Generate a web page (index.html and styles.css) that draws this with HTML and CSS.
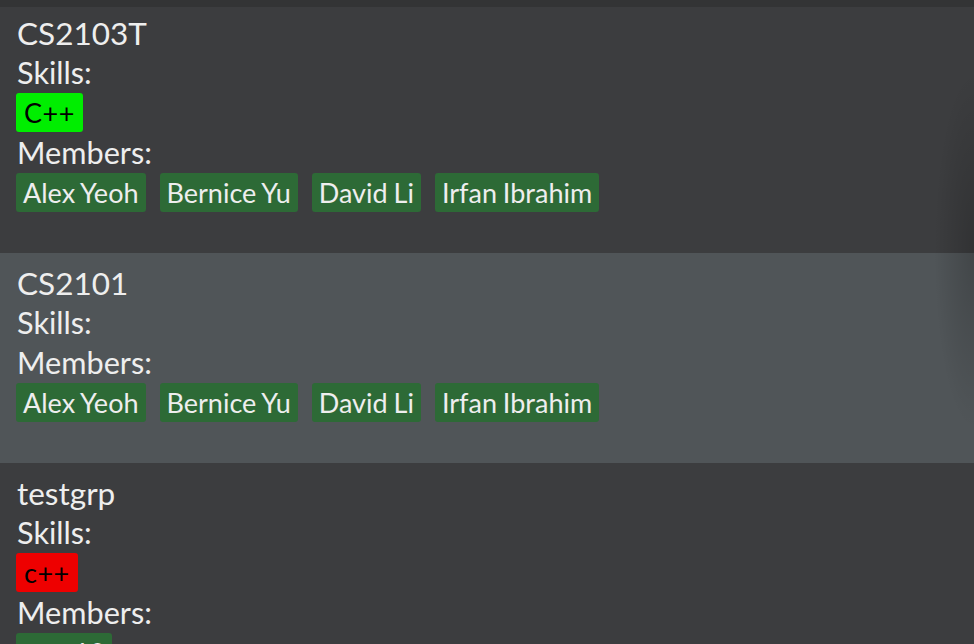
FILE: index.html
```html
<!DOCTYPE html>
<html lang="en">
<head>
<meta charset="utf-8">
<title>Groups</title>
<link rel="stylesheet" href="styles.css">
</head>
<body>
<div class="list">
  <div class="card card-first">
    <div class="title">CS2103T</div>
    <div class="label">Skills:</div>
    <div class="tags">
      <span class="tag tag-skill-ok">C++</span>
    </div>
    <div class="label">Members:</div>
    <div class="tags">
      <span class="tag">Alex Yeoh</span>
      <span class="tag">Bernice Yu</span>
      <span class="tag">David Li</span>
      <span class="tag">Irfan Ibrahim</span>
    </div>
  </div>
  <div class="card card-selected">
    <div class="title">CS2101</div>
    <div class="label">Skills:</div>
    <div class="label">Members:</div>
    <div class="tags">
      <span class="tag">Alex Yeoh</span>
      <span class="tag">Bernice Yu</span>
      <span class="tag">David Li</span>
      <span class="tag">Irfan Ibrahim</span>
    </div>
  </div>
  <div class="card">
    <div class="title">testgrp</div>
    <div class="label">Skills:</div>
    <div class="tags">
      <span class="tag tag-skill-bad">c++</span>
    </div>
    <div class="label">Members:</div>
    <div class="tags">
      <span class="tag">user12</span>
    </div>
  </div>
  <div class="edge-shadow"></div>
</div>
</body>
</html>
```
FILE: styles.css
```css
html, body {
  margin: 0;
  padding: 0;
  height: 100%;
  overflow: hidden;
  background: #3c3d3f;
}

.list {
  position: relative;
  display: flex;
  flex-direction: column;
  padding-top: 7px;
  background: #333435;
  min-height: 100%;
  box-sizing: border-box;
  font-family: "Lato", "Liberation Sans", sans-serif;
  color: #eeeeee;
}

.card {
  background: #3c3d3f;
  padding: 10px 0 40px 17px;
}

.card-first {
  padding-top: 6px;
}

.card-selected {
  background: #505558;
}

.title {
  font-size: 31.5px;
  line-height: 40px;
  height: 40px;
  white-space: nowrap;
}

.label {
  font-size: 30.7px;
  line-height: 40px;
  height: 40px;
  white-space: nowrap;
}

.tags {
  display: flex;
  gap: 14px;
  height: 40px;
  margin-left: -1px;
  align-items: flex-start;
}

.tag {
  display: block;
  height: 39px;
  box-sizing: border-box;
  padding: 3px 7px;
  font-size: 27px;
  line-height: 33px;
  border-radius: 3px;
  background: #2d6a36;
  color: #eeeeee;
  white-space: nowrap;
  word-spacing: -1px;
}

.tag-skill-ok {
  background: #00ee00;
  color: #000000;
  padding: 3px 8px;
  letter-spacing: 0.5px;
}

.tag-skill-bad {
  background: #ee0000;
  color: #000000;
  padding: 3px 8px;
  letter-spacing: 0.5px;
}

.edge-shadow {
  position: absolute;
  right: 0;
  top: 70px;
  width: 50px;
  height: 360px;
  pointer-events: none;
  background: radial-gradient(ellipse 40px 180px at 100% 50%, rgba(0, 0, 0, 0.18), rgba(0, 0, 0, 0));
}
```
